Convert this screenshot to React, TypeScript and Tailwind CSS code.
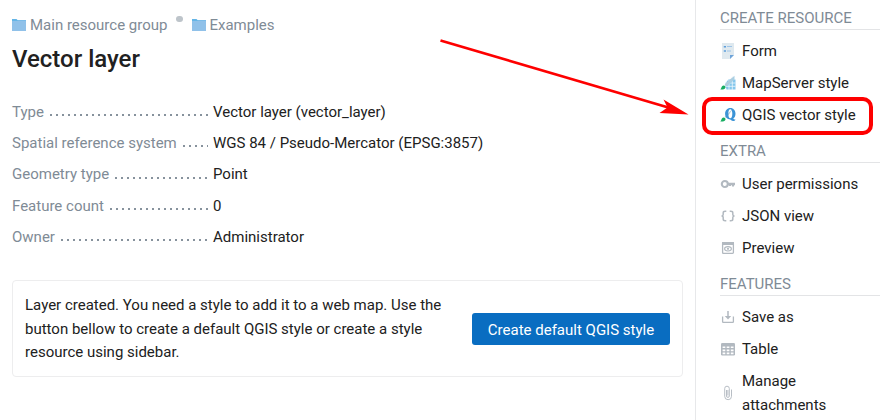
import type { ReactNode } from "react";

function Folder() {
  return (
    <svg width="14" height="12" viewBox="0 0 14 12" className="shrink-0">
      <path d="M0 0h4.5l1 1H14v11H0z" fill="#64b5e6" />
      <path d="M0 2h5l1-0.6h8V12H0z" fill="#90c1e9" />
    </svg>
  );
}

function Row({ label, value }: { label: string; value: string }) {
  return (
    <div className="flex h-[31.3px] items-center">
      <dt className="flex w-[196px] items-center whitespace-nowrap text-[#7f8b96]">
        <span>{label}</span>
        <span className="ml-[6px] mt-[7px] h-[2px] flex-1 bg-[linear-gradient(to_right,#87929d_2px,transparent_2px)] bg-[length:6px_2px]" />
      </dt>
      <dd className="ml-[5px]">{value}</dd>
    </div>
  );
}

function Brush() {
  return (
    <g>
      <path d="M4.500 10 13.500 1 6.500 11z" fill="#b5cbd8" />
      <path d="M0.200 14.200c1.300-.4 1-1.700 1.700-2.700.8-1.100 2.500-1.200 3.300-.2.800 1.200 0 2.400-1.400 2.900-1.100.3-2.600.3-3.600 0z" fill="#17ad62" />
    </g>
  );
}

function FormIcon() {
  return (
    <svg width="16" height="16" viewBox="0 0 16 16">
      <path d="M2 0h12v12l-4 4H2z" fill="#dfe9ef" />
      <path d="M3.800 3h2.200v1.500H3.800zM3.800 7.300h2.200v1.500H3.800z" fill="#5d9edb" />
      <path d="M7 3.100h5v1H7zM7 7.500h4v1H7z" fill="#9fc5e8" />
      <path d="M10 12h4l-4 4z" fill="#6fa4d9" />
    </svg>
  );
}

function MapServerIcon() {
  return (
    <svg width="16" height="16" viewBox="0 0 16 16">
      <path d="M8.500 4.500H15.500V14.500H6.500L5.500 11V8z" fill="#84c6ec" />
      <path d="M5.500 8h10M5.500 11.300h10M9 5v10M12.300 4v11" stroke="#eef8fd" strokeWidth="0.8" />
      <path d="M5 9.500 14.500 0.800V4.500L7 11z" fill="#a9cfe3" />
      <Brush />
    </svg>
  );
}

function QgisIcon() {
  return (
    <svg width="16" height="16" viewBox="0 0 16 16">
      <Brush />
      <path
        fillRule="evenodd"
        d="M10.300 1c3.200 0 5.200 2.500 5.200 5.700 0 2.200-.9 4-2.300 5 .6.700 1.300.8 2.300.7-.6 1.200-1.500 1.700-2.600 1.500-1.100-.2-1.700-.9-2.600-1.500-3.100 0-5.200-2.500-5.200-5.700S7.200 1 10.300 1zM10.300 2.200C9 2.200 8.300 4 8.300 6.700s.7 4.500 2 4.500 2-1.800 2-4.500-.7-4.500-2-4.500z"
        fill="#3c94d6"
      />
    </svg>
  );
}

function KeyIcon() {
  return (
    <svg width="16" height="16" viewBox="0 0 16 16">
      <circle cx="4.800" cy="8" r="3" fill="none" stroke="#b2b9c0" strokeWidth="2.100" />
      <path d="M8 6.700h7v2.600h-1v1.200h-2v-1.200h-1v.7H9v-.7H8z" fill="#b2b9c0" />
    </svg>
  );
}

function JsonIcon() {
  return (
    <svg width="16" height="16" viewBox="0 0 16 16" fill="none" stroke="#b2b9c0" strokeWidth="1.500">
      <path d="M6.300 3.200H5.200Q3.200 3.200 3.200 4.700V6.500Q3.200 8 1.500 8Q3.200 8 3.200 9.500v1.800q0 1.500 2 1.500h1.100" />
      <path d="M9.700 3.200h1.100q2 0 2 1.500v1.800q0 1.500 1.700 1.500q-1.700 0-1.700 1.500v1.800q0 1.500-2 1.500h-1.100" />
    </svg>
  );
}

function PreviewIcon() {
  return (
    <svg width="16" height="16" viewBox="0 0 16 16">
      <rect x="2.600" y="2.600" width="10.800" height="10.800" rx=".8" fill="none" stroke="#b2b9c0" strokeWidth="1.300" />
      <path d="M2 2h12v3H2z" fill="#b2b9c0" />
      <ellipse cx="8" cy="8.800" rx="3.400" ry="2.200" fill="none" stroke="#b2b9c0" strokeWidth="1.100" />
      <circle cx="8" cy="8.800" r="1.100" fill="#b2b9c0" />
    </svg>
  );
}

function SaveIcon() {
  return (
    <svg width="16" height="16" viewBox="0 0 16 16" fill="none" stroke="#b2b9c0" strokeWidth="1.300">
      <path d="M2.600 7.500v5.200q0 .7.700.7h9.400q.7 0 .7-.7V7.500" />
      <path d="M8 2v6" strokeWidth="1.500" />
      <path d="M4.800 7h6.400L8 10.500z" fill="#b2b9c0" stroke="none" />
    </svg>
  );
}

function TableIcon() {
  return (
    <svg width="16" height="16" viewBox="0 0 16 16">
      <rect x="1" y="2" width="14" height="12.500" rx="1.200" fill="#b2b9c0" />
      <path
        d="M2.600 5.400H5.300V7.100H2.600zM6.700 5.400H9.400V7.100H6.700zM10.800 5.400h2.700V7.100h-2.700zM2.600 8.400h2.700v1.800H2.600zM6.700 8.400h2.700v1.800H6.700zM10.800 8.400h2.700v1.800h-2.700zM2.600 11.500h2.700v1.700H2.600zM6.700 11.500h2.700v1.700H6.700zM10.800 11.500h2.700v1.700h-2.700z"
        fill="#fff"
      />
    </svg>
  );
}

function ClipIcon() {
  return (
    <svg width="16" height="16" viewBox="0 0 16 16" fill="none" stroke="#b8bec5" strokeWidth="1">
      <path d="M6.500 5v6a1.400 1.400 0 0 0 2.800 0V3.500a2.300 2.300 0 0 0-4.600 0v7.800a3.400 3.400 0 0 0 6.800 0V4.500M7.900 5v5.500" />
    </svg>
  );
}

function Item({ icon, children }: { icon: ReactNode; children: ReactNode }) {
  return (
    <a className="flex items-center gap-[6px] py-1">
      <span className="shrink-0">{icon}</span>
      <span>{children}</span>
    </a>
  );
}

function Group({ title, children }: { title: string; children: ReactNode }) {
  return (
    <section className="mb-2">
      <h2 className="mb-[5px] h-[24px] border-b border-[#e3e4e6] leading-[25px] text-[#7f8b96]">{title}</h2>
      {children}
    </section>
  );
}

export default function App() {
  return (
    <div className="relative flex h-[420px] w-[892px] overflow-hidden bg-white font-['Roboto',sans-serif] text-[15px] leading-[24px] text-[#212121]">
      <main className="w-[695px] shrink-0 pl-[12px] pr-[12px] pt-[13px]">
        <nav className="flex items-center text-[#7f8b96]">
          <Folder />
          <span className="ml-[4px]">Main resource group</span>
          <span className="mb-[12px] ml-[9px] mr-[9.500px] size-[6.500px] rounded-full bg-[#bdc4ca]" />
          <Folder />
          <span className="ml-[3px]">Examples</span>
        </nav>
        <h1 className="mt-[6px] text-[24px] font-medium leading-[32px]">Vector layer</h1>
        <dl className="mt-[21px]">
          <Row label="Type" value="Vector layer (vector_layer)" />
          <Row label="Spatial reference system" value="WGS 84 / Pseudo-Mercator (EPSG:3857)" />
          <Row label="Geometry type" value="Point" />
          <Row label="Feature count" value="0" />
          <Row label="Owner" value="Administrator" />
        </dl>
        <div className="mt-[27.500px] flex h-[97px] items-center justify-between rounded-[4px] border border-[#ededee] px-[12px] pt-px">
          <p className="w-[430px] pt-px leading-[23.600px]">
            Layer created. You need a style to add it to a web map. Use the button bellow to create a default QGIS style or create a style resource using sidebar.
          </p>
          <button className="mt-px h-[32px] w-[198px] shrink-0 rounded-[3px] bg-[#096dc1] pt-px text-white">Create default QGIS style</button>
        </div>
      </main>
      <aside className="w-[197px] shrink-0 border-l border-[#e7e8ea] pl-[24px] pr-[12px] pt-[6px]">
        <Group title="CREATE RESOURCE">
          <Item icon={<FormIcon />}>Form</Item>
          <Item icon={<MapServerIcon />}>MapServer style</Item>
          <Item icon={<QgisIcon />}>QGIS vector style</Item>
        </Group>
        <Group title="EXTRA">
          <Item icon={<KeyIcon />}>User permissions</Item>
          <Item icon={<JsonIcon />}>JSON view</Item>
          <Item icon={<PreviewIcon />}>Preview</Item>
        </Group>
        <Group title="FEATURES">
          <Item icon={<SaveIcon />}>Save as</Item>
          <Item icon={<TableIcon />}>Table</Item>
          <Item icon={<ClipIcon />}>Manage attachments</Item>
        </Group>
      </aside>
      <div className="absolute left-[702px] top-[97px] h-[38px] w-[171px] rounded-[10px] border-4 border-[#fe0000]" />
      <svg className="absolute left-[430px] top-[30px]" width="270" height="95" viewBox="0 0 270 95">
        <path d="M10.500 10.500 240 78" stroke="#fe0000" strokeWidth="2.700" />
        <path d="M258.500 84.500 233.500 69.500l4 8-8 5.500z" fill="#fe0000" />
      </svg>
    </div>
  );
}
